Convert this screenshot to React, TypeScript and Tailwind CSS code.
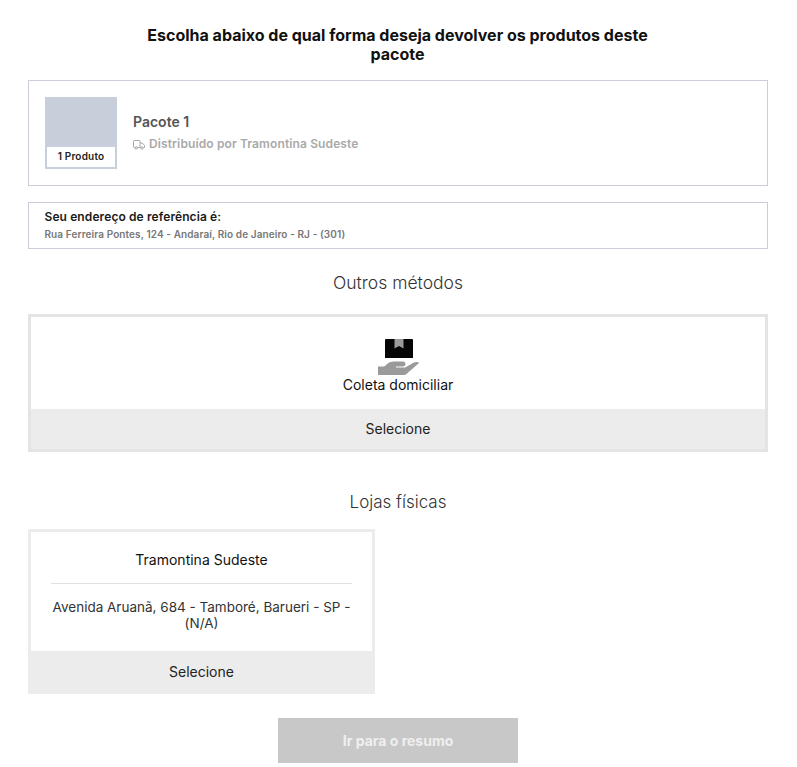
const font = { fontFamily: "Inter, 'Noto Sans', sans-serif" };

function Truck() {
  return (
    <svg width="12" height="10" viewBox="0 0 12 10" fill="none" stroke="#a8a8a8" strokeWidth="1" className="mr-[4px] mt-[1px] shrink-0">
      <path d="M2 7.500H1.200a.7.7 0 0 1-.7-.7V1.200a.7.7 0 0 1 .7-.7h5.100a.7.7 0 0 1 .7.7v6.300H4.500" />
      <path d="M7 3h2.200L11.500 5.400v2.100h-1M7.700 7.500H7" />
      <circle cx="3.200" cy="8" r="1.200" />
      <circle cx="9" cy="8" r="1.200" />
    </svg>
  );
}

function HandBox() {
  return (
    <svg width="41" height="37" viewBox="0 0 41 37" className="block">
      <path d="M7 1a1 1 0 0 1 1-1h26a1 1 0 0 1 1 1v18H7z" fill="#050505" />
      <path d="M16.500 0h9v9.500l-4.500-2.500-4.500 2.500z" fill="#9a9a9a" />
      <path d="M0 27.500H6L8 26C10 23.500 13 22.500 16 22.500H25C26.500 22.500 27.500 23.500 27.500 25S26.500 27.500 25 27.500H18V28.500H27L36 23.500C38 22.500 40.500 23 41 24L29 34.500C28 35.500 26.500 36 25 36H0Z" fill="#9a9a9a" />
    </svg>
  );
}

export default function App() {
  return (
    <div className="h-[767px] w-[797px] overflow-hidden bg-white pt-[26px] pl-[28px] text-[#111]" style={font}>
      <div className="w-[740px]">
        <h1 className="mx-auto w-[520px] -translate-x-[0.5px] text-center text-[16px] font-bold leading-[19px] text-[#111]">
          Escolha abaixo de qual forma deseja devolver os produtos deste pacote
        </h1>

        <div className="mt-[16px] flex h-[106px] items-center border border-[#c9ced9] pl-[16px]">
          <div className="flex h-[72px] w-[72px] flex-col justify-end bg-[#c8cfdb] p-[2px]">
            <div className="flex h-[20px] items-center justify-center bg-white pb-[1px] text-[10px] font-semibold tracking-[0.2px] text-[#222]">1 Produto</div>
          </div>
          <div className="ml-[16px] flex flex-col">
            <div className="-mt-[1px] text-[14px] font-semibold leading-[16px] text-[#555]">Pacote 1</div>
            <div className="mt-[7px] flex items-center text-[12px] font-semibold leading-[14px] tracking-[0.12px] text-[#a9a9a9]">
              <Truck />
              Distribuído por Tramontina Sudeste
            </div>
          </div>
        </div>

        <div className="mt-[16px] flex h-[47px] flex-col justify-center border border-[#c9ced9] pb-[1px] pl-[15.500px]">
          <div className="text-[12px] font-semibold leading-[14px] tracking-[0.1px] text-[#1a1a1a]">Seu endereço de referência é:</div>
          <div className="mt-[4px] text-[10px] font-semibold leading-[12px] tracking-[0.1px] text-[#777]">Rua Ferreira Pontes, 124 - Andaraí, Rio de Janeiro - RJ - (301)</div>
        </div>

        <h2 className="mt-[24px] text-center text-[17.500px] font-light leading-[20px] text-[#333]">Outros métodos</h2>

        <div className="mt-[21px] border-[3px] border-[#e4e4e4]">
          <div className="flex h-[92px] flex-col items-center pt-[22px]">
            <HandBox />
            <div className="mt-[1px] text-[14px] leading-[16px] text-[#111]">Coleta domiciliar</div>
          </div>
          <div className="flex h-[40px] items-center justify-center bg-[#ececec] pb-[2px] text-[14px] text-[#222]">Selecione</div>
        </div>

        <h2 className="mt-[40px] text-center text-[17px] font-light leading-[20px] text-[#333]">Lojas físicas</h2>

        <div className="mt-[17px] w-[347px] border-[3px] border-b-0 border-[#ececec]">
          <div className="flex h-[119px] flex-col px-[20px]">
            <div className="flex h-[52px] items-center justify-center border-b border-[#e0e0e0] pt-[4px] text-[14px] text-[#111]">Tramontina Sudeste</div>
            <div className="mt-[15px] text-center text-[13.500px] leading-[16px] text-[#333]">Avenida Aruanã, 684 - Tamboré, Barueri - SP - (N/A)</div>
          </div>
        </div>
        <div className="flex h-[43px] w-[347px] items-center justify-center bg-[#ececec] pb-[2px] text-[14px] text-[#222]">Selecione</div>

        <button className="mx-auto mt-[24px] flex h-[45px] w-[240px] items-center justify-center bg-[#c8c8c8] text-[14px] font-bold text-[#efefef]">Ir para o resumo</button>
      </div>
    </div>
  );
}
